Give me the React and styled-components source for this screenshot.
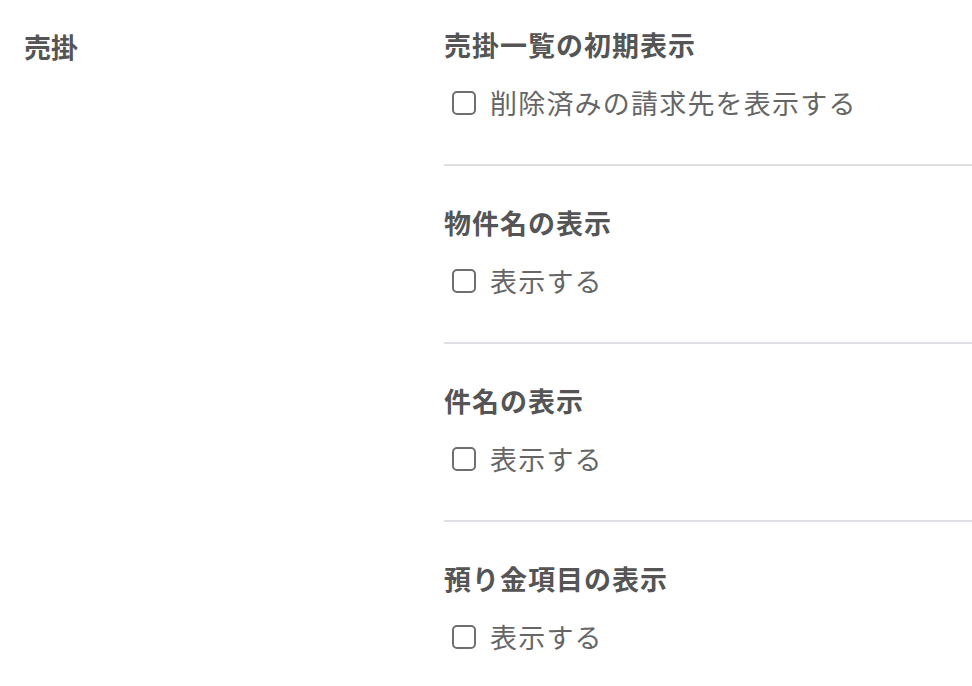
import styled, { createGlobalStyle } from "styled-components";

const GlobalStyle = createGlobalStyle`
  body {
    margin: 0;
    background: #fff;
    font-family: "Noto Sans CJK JP", "Noto Sans", sans-serif;
  }
`;

const Page = styled.div`
  display: grid;
  grid-template-columns: 420px 1fr;
  padding: 24px 0 0 24px;
`;

const GroupLabel = styled.div`
  font-size: 27px;
  font-weight: 700;
  line-height: 46px;
  color: #555;
`;

const Sections = styled.div`
  display: flex;
  flex-direction: column;
`;

const Section = styled.section`
  padding: 36px 0 40px;
  border-bottom: 2px solid #dddfe2;

  &:first-child {
    padding-top: 0;
  }
  &:last-child {
    border-bottom: none;
  }
`;

const Heading = styled.h3`
  margin: 0 0 16px;
  font-size: 27px;
  font-weight: 700;
  line-height: 42px;
  letter-spacing: 1px;
  color: #555;
`;

const Option = styled.label`
  display: flex;
  align-items: center;
  gap: 14px;
  padding-left: 8px;
  font-size: 27px;
  line-height: 42px;
  letter-spacing: 1.2px;
  color: #666;
  cursor: pointer;
`;

const Box = styled.input.attrs({ type: "checkbox" })`
  appearance: none;
  margin: 0;
  width: 24px;
  height: 24px;
  border: 2px solid #6f6f6f;
  border-radius: 5px;
  background: #fff;
  flex-shrink: 0;
`;

const settings = [
  { title: "売掛一覧の初期表示", option: "削除済みの請求先を表示する" },
  { title: "物件名の表示", option: "表示する" },
  { title: "件名の表示", option: "表示する" },
  { title: "預り金項目の表示", option: "表示する" },
];

const App = () => {
  return (
    <>
      <GlobalStyle />
      <Page>
        <GroupLabel>売掛</GroupLabel>
        <Sections>
          {settings.map((s) => (
            <Section key={s.title}>
              <Heading>{s.title}</Heading>
              <Option>
                <Box />
                {s.option}
              </Option>
            </Section>
          ))}
        </Sections>
      </Page>
    </>
  );
};

export default App;
